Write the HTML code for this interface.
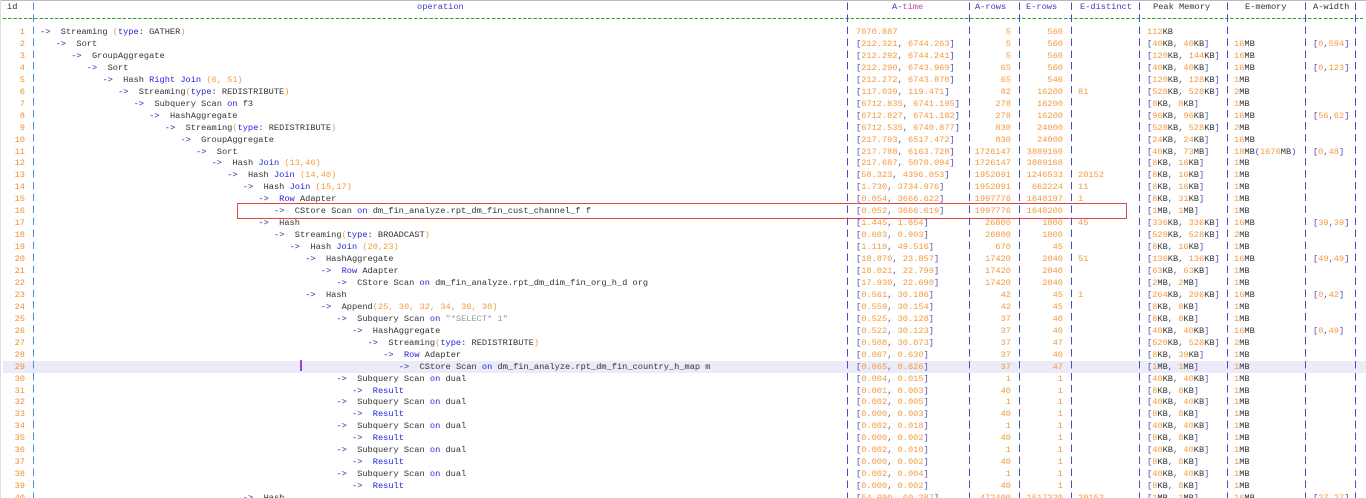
<!DOCTYPE html>
<html><head><meta charset="utf-8">
<style>
html,body{margin:0;padding:0;background:#fff;width:1366px;height:498px;overflow:hidden;position:relative}
body{font-family:"Liberation Mono",monospace;font-size:8.67px;color:#333}
b,s,u,i{font-weight:normal;font-style:normal;text-decoration:none}
.top{position:absolute;left:0;top:0;width:1366px;height:1px;background:#bbb}
.lft{position:absolute;left:0;top:0;width:1px;height:498px;background:#ddd}
.r{position:absolute;left:0;width:1366px;height:12px;line-height:12px;white-space:pre}
.r>*{position:absolute;top:0;white-space:pre}
.n{right:1341px;color:#f0912e}
.t{left:856px}
.ar{right:355px;text-align:right}
.er{right:303px;text-align:right}
.ed{left:1078px}
.pm{left:1147px}
.em{left:1234px}
.aw{left:1313px}
.num{color:#f39a3c}
.br{color:#4b4bb8}
.kw{color:#2222dd}
.ar2{color:#1f1f9a}
.str{color:#999}
.sep{position:absolute;top:0;width:1px;height:498px;background:repeating-linear-gradient(to bottom,transparent 0,transparent 2.5px,#4a4ac4 2.5px,#4a4ac4 10px,transparent 10px,transparent 11.95px)}
.dash{position:absolute;left:3px;top:18px;width:1360px;height:1px;background:repeating-linear-gradient(to right,#3a9a3a 0,#3a9a3a 3.5px,transparent 3.5px,transparent 5.2px)}
.hl{position:absolute;left:3px;width:1363px;height:12px;background:#ebebf9}
.h{position:absolute;top:1px;line-height:12px;white-space:pre}
.hb{color:#3b3bc0}.hp{color:#c04a9a}
</style></head><body>
<div class="top"></div><div class="lft"></div>
<div class="hl" id="hl"></div>
<div class="dash"></div>
<div class="h" style="left:7px">id</div>
<div class="h hb" style="left:417px">operation</div>
<div class="h" style="left:892px"><span class="hb">A-</span><span class="hp">time</span></div>
<div class="h hb" style="left:975px">A-rows</div>
<div class="h hb" style="left:1026px">E-rows</div>
<div class="h hb" style="left:1080px">E-distinct</div>
<div class="h" style="left:1153px">Peak Memory</div>
<div class="h" style="left:1245px">E-memory</div>
<div class="h" style="left:1313px">A-width</div>
<div class="sep" style="left:33px;background:repeating-linear-gradient(to bottom,transparent 0,transparent 2.5px,#5a8ad0 2.5px,#5a8ad0 10px,transparent 10px,transparent 11.95px)"></div>
<div class="sep" style="left:847px"></div>
<div class="sep" style="left:969px"></div>
<div class="sep" style="left:1019px"></div>
<div class="sep" style="left:1071px"></div>
<div class="sep" style="left:1139px"></div>
<div class="sep" style="left:1227px"></div>
<div class="sep" style="left:1305px"></div>
<div class="sep" style="left:1355px"></div>
<div style="position:absolute;left:300px;top:360px;width:1.5px;height:11px;background:#a040e0"></div>
<div style="position:absolute;left:237px;top:203px;width:888px;height:14px;border:1px solid #e04848"></div>
<div id="rows">
<div class="r"><i class="n">1</i><b class="o" data-l="0">->  Streaming (type: GATHER)</b><s class="t">7070.887</s><u class="ar">5</u><u class="er">560</u><s class="ed"></s><s class="pm">112KB</s><s class="em"></s><s class="aw"></s></div>
<div class="r"><i class="n">2</i><b class="o" data-l="1">->  Sort</b><s class="t">[212.321, 6744.263]</s><u class="ar">5</u><u class="er">560</u><s class="ed"></s><s class="pm">[40KB, 40KB]</s><s class="em">16MB</s><s class="aw">[0,594]</s></div>
<div class="r"><i class="n">3</i><b class="o" data-l="2">->  GroupAggregate</b><s class="t">[212.292, 6744.241]</s><u class="ar">5</u><u class="er">560</u><s class="ed"></s><s class="pm">[120KB, 144KB]</s><s class="em">16MB</s><s class="aw"></s></div>
<div class="r"><i class="n">4</i><b class="o" data-l="3">->  Sort</b><s class="t">[212.290, 6743.969]</s><u class="ar">65</u><u class="er">560</u><s class="ed"></s><s class="pm">[40KB, 40KB]</s><s class="em">16MB</s><s class="aw">[0,123]</s></div>
<div class="r"><i class="n">5</i><b class="o" data-l="4">->  Hash Right Join (6, 51)</b><s class="t">[212.272, 6743.870]</s><u class="ar">65</u><u class="er">546</u><s class="ed"></s><s class="pm">[120KB, 128KB]</s><s class="em">1MB</s><s class="aw"></s></div>
<div class="r"><i class="n">6</i><b class="o" data-l="5">->  Streaming(type: REDISTRIBUTE)</b><s class="t">[117.039, 119.471]</s><u class="ar">82</u><u class="er">16200</u><s class="ed">81</s><s class="pm">[528KB, 528KB]</s><s class="em">2MB</s><s class="aw"></s></div>
<div class="r"><i class="n">7</i><b class="o" data-l="6">->  Subquery Scan on f3</b><s class="t">[6712.835, 6741.195]</s><u class="ar">278</u><u class="er">16200</u><s class="ed"></s><s class="pm">[8KB, 8KB]</s><s class="em">1MB</s><s class="aw"></s></div>
<div class="r"><i class="n">8</i><b class="o" data-l="7">->  HashAggregate</b><s class="t">[6712.827, 6741.182]</s><u class="ar">278</u><u class="er">16200</u><s class="ed"></s><s class="pm">[96KB, 96KB]</s><s class="em">16MB</s><s class="aw">[56,62]</s></div>
<div class="r"><i class="n">9</i><b class="o" data-l="8">->  Streaming(type: REDISTRIBUTE)</b><s class="t">[6712.535, 6740.877]</s><u class="ar">830</u><u class="er">24000</u><s class="ed"></s><s class="pm">[528KB, 528KB]</s><s class="em">2MB</s><s class="aw"></s></div>
<div class="r"><i class="n">10</i><b class="o" data-l="9">->  GroupAggregate</b><s class="t">[217.793, 6517.472]</s><u class="ar">830</u><u class="er">24000</u><s class="ed"></s><s class="pm">[24KB, 24KB]</s><s class="em">16MB</s><s class="aw"></s></div>
<div class="r"><i class="n">11</i><b class="o" data-l="10">->  Sort</b><s class="t">[217.788, 6163.728]</s><u class="ar">1726147</u><u class="er">3889160</u><s class="ed"></s><s class="pm">[40KB, 73MB]</s><s class="em">18MB(1676MB)</s><s class="aw">[0,48]</s></div>
<div class="r"><i class="n">12</i><b class="o" data-l="11">->  Hash Join (13,46)</b><s class="t">[217.687, 5070.094]</s><u class="ar">1726147</u><u class="er">3889168</u><s class="ed"></s><s class="pm">[8KB, 16KB]</s><s class="em">1MB</s><s class="aw"></s></div>
<div class="r"><i class="n">13</i><b class="o" data-l="12">->  Hash Join (14,40)</b><s class="t">[58.323, 4396.053]</s><u class="ar">1952091</u><u class="er">1246533</u><s class="ed">20152</s><s class="pm">[8KB, 16KB]</s><s class="em">1MB</s><s class="aw"></s></div>
<div class="r"><i class="n">14</i><b class="o" data-l="13">->  Hash Join (15,17)</b><s class="t">[1.730, 3734.976]</s><u class="ar">1952091</u><u class="er">662224</u><s class="ed">11</s><s class="pm">[8KB, 16KB]</s><s class="em">1MB</s><s class="aw"></s></div>
<div class="r"><i class="n">15</i><b class="o" data-l="14">->  Row Adapter</b><s class="t">[0.054, 3666.622]</s><u class="ar">1997776</u><u class="er">1648197</u><s class="ed">1</s><s class="pm">[8KB, 31KB]</s><s class="em">1MB</s><s class="aw"></s></div>
<div class="r"><i class="n">16</i><b class="o" data-l="15">->  CStore Scan on dm_fin_analyze.rpt_dm_fin_cust_channel_f f</b><s class="t">[0.052, 3666.619]</s><u class="ar">1997776</u><u class="er">1648200</u><s class="ed"></s><s class="pm">[1MB, 1MB]</s><s class="em">1MB</s><s class="aw"></s></div>
<div class="r"><i class="n">17</i><b class="o" data-l="14">->  Hash</b><s class="t">[1.445, 1.854]</s><u class="ar">26800</u><u class="er">1800</u><s class="ed">45</s><s class="pm">[336KB, 336KB]</s><s class="em">16MB</s><s class="aw">[39,39]</s></div>
<div class="r"><i class="n">18</i><b class="o" data-l="15">->  Streaming(type: BROADCAST)</b><s class="t">[0.603, 0.903]</s><u class="ar">26800</u><u class="er">1800</u><s class="ed"></s><s class="pm">[528KB, 528KB]</s><s class="em">2MB</s><s class="aw"></s></div>
<div class="r"><i class="n">19</i><b class="o" data-l="16">->  Hash Join (20,23)</b><s class="t">[1.119, 49.516]</s><u class="ar">670</u><u class="er">45</u><s class="ed"></s><s class="pm">[8KB, 16KB]</s><s class="em">1MB</s><s class="aw"></s></div>
<div class="r"><i class="n">20</i><b class="o" data-l="17">->  HashAggregate</b><s class="t">[18.870, 23.857]</s><u class="ar">17420</u><u class="er">2040</u><s class="ed">51</s><s class="pm">[136KB, 136KB]</s><s class="em">16MB</s><s class="aw">[49,49]</s></div>
<div class="r"><i class="n">21</i><b class="o" data-l="18">->  Row Adapter</b><s class="t">[18.021, 22.799]</s><u class="ar">17420</u><u class="er">2040</u><s class="ed"></s><s class="pm">[63KB, 63KB]</s><s class="em">1MB</s><s class="aw"></s></div>
<div class="r"><i class="n">22</i><b class="o" data-l="19">->  CStore Scan on dm_fin_analyze.rpt_dm_dim_fin_org_h_d org</b><s class="t">[17.930, 22.690]</s><u class="ar">17420</u><u class="er">2040</u><s class="ed"></s><s class="pm">[2MB, 2MB]</s><s class="em">1MB</s><s class="aw"></s></div>
<div class="r"><i class="n">23</i><b class="o" data-l="17">->  Hash</b><s class="t">[0.561, 30.186]</s><u class="ar">42</u><u class="er">45</u><s class="ed">1</s><s class="pm">[264KB, 296KB]</s><s class="em">16MB</s><s class="aw">[0,42]</s></div>
<div class="r"><i class="n">24</i><b class="o" data-l="18">->  Append(25, 30, 32, 34, 36, 38)</b><s class="t">[0.559, 30.154]</s><u class="ar">42</u><u class="er">45</u><s class="ed"></s><s class="pm">[8KB, 8KB]</s><s class="em">1MB</s><s class="aw"></s></div>
<div class="r"><i class="n">25</i><b class="o" data-l="19">->  Subquery Scan on "*SELECT* 1"</b><s class="t">[0.525, 30.128]</s><u class="ar">37</u><u class="er">40</u><s class="ed"></s><s class="pm">[8KB, 8KB]</s><s class="em">1MB</s><s class="aw"></s></div>
<div class="r"><i class="n">26</i><b class="o" data-l="20">->  HashAggregate</b><s class="t">[0.522, 30.123]</s><u class="ar">37</u><u class="er">40</u><s class="ed"></s><s class="pm">[40KB, 40KB]</s><s class="em">16MB</s><s class="aw">[0,49]</s></div>
<div class="r"><i class="n">27</i><b class="o" data-l="21">->  Streaming(type: REDISTRIBUTE)</b><s class="t">[0.508, 30.073]</s><u class="ar">37</u><u class="er">47</u><s class="ed"></s><s class="pm">[520KB, 528KB]</s><s class="em">2MB</s><s class="aw"></s></div>
<div class="r"><i class="n">28</i><b class="o" data-l="22">->  Row Adapter</b><s class="t">[0.067, 0.630]</s><u class="ar">37</u><u class="er">40</u><s class="ed"></s><s class="pm">[8KB, 39KB]</s><s class="em">1MB</s><s class="aw"></s></div>
<div class="r"><i class="n">29</i><b class="o" data-l="23">->  CStore Scan on dm_fin_analyze.rpt_dm_fin_country_h_map m</b><s class="t">[0.065, 0.626]</s><u class="ar">37</u><u class="er">47</u><s class="ed"></s><s class="pm">[1MB, 1MB]</s><s class="em">1MB</s><s class="aw"></s></div>
<div class="r"><i class="n">30</i><b class="o" data-l="19">->  Subquery Scan on dual</b><s class="t">[0.004, 0.015]</s><u class="ar">1</u><u class="er">1</u><s class="ed"></s><s class="pm">[40KB, 40KB]</s><s class="em">1MB</s><s class="aw"></s></div>
<div class="r"><i class="n">31</i><b class="o" data-l="20">->  Result</b><s class="t">[0.001, 0.003]</s><u class="ar">40</u><u class="er">1</u><s class="ed"></s><s class="pm">[8KB, 8KB]</s><s class="em">1MB</s><s class="aw"></s></div>
<div class="r"><i class="n">32</i><b class="o" data-l="19">->  Subquery Scan on dual</b><s class="t">[0.002, 0.005]</s><u class="ar">1</u><u class="er">1</u><s class="ed"></s><s class="pm">[40KB, 40KB]</s><s class="em">1MB</s><s class="aw"></s></div>
<div class="r"><i class="n">33</i><b class="o" data-l="20">->  Result</b><s class="t">[0.000, 0.003]</s><u class="ar">40</u><u class="er">1</u><s class="ed"></s><s class="pm">[8KB, 8KB]</s><s class="em">1MB</s><s class="aw"></s></div>
<div class="r"><i class="n">34</i><b class="o" data-l="19">->  Subquery Scan on dual</b><s class="t">[0.002, 0.018]</s><u class="ar">1</u><u class="er">1</u><s class="ed"></s><s class="pm">[40KB, 40KB]</s><s class="em">1MB</s><s class="aw"></s></div>
<div class="r"><i class="n">35</i><b class="o" data-l="20">->  Result</b><s class="t">[0.000, 0.002]</s><u class="ar">40</u><u class="er">1</u><s class="ed"></s><s class="pm">[8KB, 8KB]</s><s class="em">1MB</s><s class="aw"></s></div>
<div class="r"><i class="n">36</i><b class="o" data-l="19">->  Subquery Scan on dual</b><s class="t">[0.002, 0.010]</s><u class="ar">1</u><u class="er">1</u><s class="ed"></s><s class="pm">[40KB, 40KB]</s><s class="em">1MB</s><s class="aw"></s></div>
<div class="r"><i class="n">37</i><b class="o" data-l="20">->  Result</b><s class="t">[0.000, 0.002]</s><u class="ar">40</u><u class="er">1</u><s class="ed"></s><s class="pm">[8KB, 8KB]</s><s class="em">1MB</s><s class="aw"></s></div>
<div class="r"><i class="n">38</i><b class="o" data-l="19">->  Subquery Scan on dual</b><s class="t">[0.002, 0.004]</s><u class="ar">1</u><u class="er">1</u><s class="ed"></s><s class="pm">[40KB, 40KB]</s><s class="em">1MB</s><s class="aw"></s></div>
<div class="r"><i class="n">39</i><b class="o" data-l="20">->  Result</b><s class="t">[0.000, 0.002]</s><u class="ar">40</u><u class="er">1</u><s class="ed"></s><s class="pm">[8KB, 8KB]</s><s class="em">1MB</s><s class="aw"></s></div>
<div class="r"><i class="n">40</i><b class="o" data-l="13">->  Hash</b><s class="t">[54.990, 60.287]</s><u class="ar">472400</u><u class="er">1517320</u><s class="ed">20152</s><s class="pm">[1MB, 1MB]</s><s class="em">16MB</s><s class="aw">[27,27]</s></div>
</div>
<script>
(function(){
function esc(s){return s.replace(/&/g,'&amp;').replace(/</g,'&lt;').replace(/>/g,'&gt;');}
var rows=document.querySelectorAll('#rows .r');
for(var i=0;i<rows.length;i++){
  var r=rows[i];var top=26+11.95*i;r.style.top=top+'px';
  if(i==28){document.getElementById('hl').style.top=top+'px';}
  var cells=r.children;
  for(var j=0;j<cells.length;j++){
    var c=cells[j];var t=c.textContent;
    if(c.classList.contains('o')){
      c.style.left=(40+15.6*parseInt(c.getAttribute('data-l')))+'px';
      c.innerHTML=t.replace(/(->)|("\*SELECT\* 1")|\b(on|type|Right|Join|Row|Result)\b|(\d+)|([(),])|([^-"\w(),]+|[\w.]+|.)/g,function(m,a,s,k,n,p,o){
        if(a)return '<span class="ar2">-&gt;</span>';
        if(s)return '<span class="str">'+esc(s)+'</span>';
        if(k)return '<span class="kw">'+k+'</span>';
        if(n)return '<span class="num">'+n+'</span>';
        if(p)return '<span class="num">'+p+'</span>';
        return esc(m);});
    } else if(c.classList.contains('n')){
    } else {
      c.innerHTML=t.replace(/(\d+(?:\.\d+)?)|([\[\](),])|([^\d\[\](),]+)/g,function(m,n,p,o){
        if(n)return '<span class="num">'+n+'</span>';
        if(p)return '<span class="br">'+p+'</span>';
        return esc(m);});
    }
  }
}
})();
</script>
</body></html>
